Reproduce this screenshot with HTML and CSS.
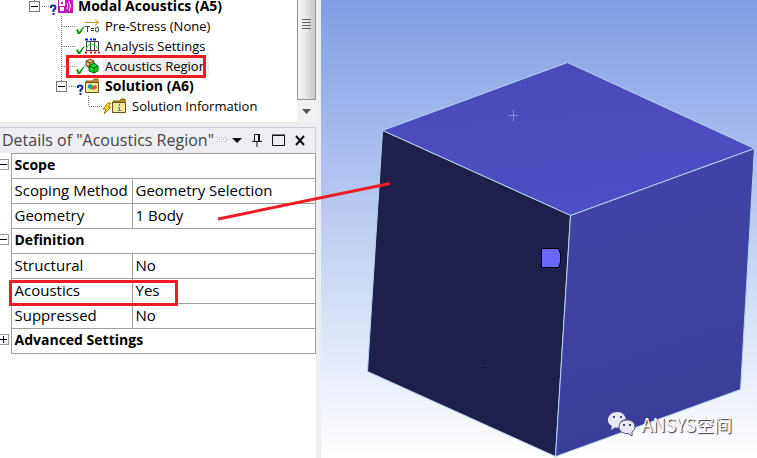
FILE: index.html
```html
<!DOCTYPE html>
<html lang="en">
<head>
<meta charset="utf-8">
<title>Modal Acoustics</title>
<link rel="stylesheet" href="styles.css">
</head>
<body>
<svg class="defs" aria-hidden="true">
  <symbol id="leaf" viewBox="0 0 20 20"><path class="dots" d="M5.5 0V20M6 10.5H20"/></symbol>
  <symbol id="last" viewBox="0 0 20 20"><path class="dots" d="M5.5 0V10M6 10.5H20"/></symbol>
  <symbol id="node" viewBox="0 0 20 20"><path class="dots" d="M5.5 0V5M13 10.5H20"/></symbol>
  <symbol id="check" viewBox="0 0 9 20"><path d="M0 14L2 13L3 16L7 11L9 10L4 18H2Z" fill="#089010"/></symbol>
  <symbol id="query" viewBox="0 0 9 20"><path d="M2 12V10.500Q2 9.500 4 9.500Q6.500 9.500 6.500 11.500Q6.500 13 4.500 14V16M4.500 17V19" fill="none" stroke="#0a2f92" stroke-width="2"/></symbol>
</svg>
<main class="app">
  <aside class="side">
    <section class="outline">
      <ul class="tree">
        <li>
          <div class="row"><span class="branch"><svg><use href="#node"/></svg><button class="toggle" aria-label="Collapse Modal Acoustics"></button></span><svg class="status"><use href="#query"/></svg>
            <svg class="icon" viewBox="0 0 15 20"><path d="M0 0H15V17H0Z" fill="#c818b8"/><path d="M1 4H7V10H1ZM2 11H6V15H2Z" fill="#fff"/><path d="M3 6H5V8H3Z" fill="#c818b8"/><path d="M9 7Q10.500 10 9 13M11 5Q14 10 11 15" fill="none" stroke="#fff"/></svg>
            <b>Modal Acoustics (A5)</b></div>
          <ul>
            <li class="row"><svg class="branch"><use href="#leaf"/></svg><svg class="status"><use href="#check"/></svg>
              <svg class="icon" viewBox="0 0 15 20"><path d="M0 6.500H13M10 3.500L13.500 6.500L10 9.500" fill="none" stroke="#c89418"/><path d="M0 10.500H5M2.500 10.500V16M6 12.500H9M6 14.500H9" fill="none" stroke="#444"/><ellipse cx="12" cy="13.500" rx="1.700" ry="2.500" fill="none" stroke="#444"/></svg>
              <span>Pre-Stress (None)</span></li>
            <li class="row"><svg class="branch"><use href="#leaf"/></svg><svg class="status"><use href="#check"/></svg>
              <svg class="icon" viewBox="0 0 15 20"><path d="M1.500 5V15M5.500 5V15M9.500 5V15M13.500 5V15M1 5.500H14M1 14.500H14" fill="none" stroke="#444"/><path d="M1 13Q3 8 7 8Q11 8 13 13" fill="none" stroke="#18d828"/><path d="M0 3.500H3M5 3.500H7M8 3.500H11" stroke="#0010f0" stroke-width="2"/><path d="M0 16.500H2M5 16.500H7M9 16.500H11M13 16.500H15" stroke="#f01010" stroke-width="2"/></svg>
              <span>Analysis Settings</span></li>
            <li class="row"><svg class="branch"><use href="#leaf"/></svg><svg class="status"><use href="#check"/></svg>
              <svg class="icon" viewBox="0 0 15 20"><path d="M1 5L5 3L9 5V10L5 12L1 10Z" fill="#dbae61" stroke="#645128"/><path d="M1 5L5 7L9 5M5 7V12" fill="none" stroke="#645128"/><path d="M4 10L9 7L13 10V15L9 17L4 15Z" fill="#12dc20" stroke="#075c13"/><path d="M4 10L9 12L13 10M9 12V17" fill="none" stroke="#075c13"/></svg>
              <span class="selected">Acoustics Region</span></li>
            <li>
              <div class="row"><span class="branch"><svg><use href="#node"/></svg><button class="toggle" aria-label="Collapse Solution"></button></span><svg class="status"><use href="#query"/></svg>
                <svg class="icon" viewBox="0 0 15 20"><path d="M1 7V5H8L9 3H13V7Z" fill="#c89018" stroke="#84600d"/><path d="M.5 6.500H13.500V16.500H.5Z" fill="#f7e994" stroke="#64531c"/><path d="M3 9L6 8L8 10L7 14L3 12Z" fill="#2297bb"/><path d="M5 9L8 10L7 13Z" fill="#15bd49"/><path d="M8 10L11 9L12 12L9 14L7 13Z" fill="#ee512c"/></svg>
                <b>Solution (A6)</b></div>
              <ul>
                <li class="row"><svg class="branch"><use href="#last"/></svg>
                  <svg class="status" viewBox="0 0 9 20"><path d="M5 7H8L5 11H8L1 18L3 13H0Z" fill="#ffdc25" stroke="#a77812"/></svg>
                  <svg class="icon" viewBox="0 0 15 20"><path d="M1 7V5H8L9 3H13V7Z" fill="#c89018" stroke="#84600d"/><path d="M.5 6.500H13.500V16.500H.5Z" fill="#f7e994" stroke="#64531c"/><path d="M7.500 8V10M6 11.500H7.500V14M6 14.500H9" fill="none" stroke="#168fca"/></svg>
                  <span>Solution Information</span></li>
              </ul>
            </li>
          </ul>
        </li>
      </ul>
      <div class="scroll">
        <div class="thumb"><i></i><i></i><i></i><i></i></div>
        <button class="down" aria-label="Scroll down"><svg width="9" height="5"><path d="M0 0H9L4.500 5Z" fill="#555"/></svg></button>
      </div>
    </section>
    <section class="details">
      <header>
        <h2>Details of "Acoustics Region"</h2>
        <svg width="12" height="6"><path d="M0 .5H12M2 2.500H12M0 4.500H12" stroke="#aaa" stroke-dasharray="1 3"/></svg>
        <div class="tools">
          <button aria-label="Menu"><svg width="10" height="14"><path d="M0 5H10L5 10Z" fill="#111"/></svg></button>
          <button aria-label="Pin"><svg width="10" height="14"><path d="M2.500 8V1.500H7.500V8M0 8.500H10M5 9V14" fill="none" stroke="#111"/><path d="M6 1H8V8H6Z" fill="#111"/></svg></button>
          <button aria-label="Maximize"><svg width="13" height="14"><path d="M.5 2.500H12.500V12.500H.5ZM0 2H13" fill="none" stroke="#111"/></svg></button>
          <button aria-label="Close"><svg width="10" height="14"><path d="M1 3L9 12M9 3L1 12" stroke="#111" stroke-width="2"/></svg></button>
        </div>
      </header>
      <table>
        <colgroup><col class="gutter"><col class="name"><col></colgroup>
        <tr><td><button class="toggle" aria-label="Collapse Scope"></button></td><th colspan="2">Scope</th></tr>
        <tr><td></td><td>Scoping Method</td><td>Geometry Selection</td></tr>
        <tr><td></td><td>Geometry</td><td>1 Body</td></tr>
        <tr><td><button class="toggle" aria-label="Collapse Definition"></button></td><th colspan="2">Definition</th></tr>
        <tr><td></td><td>Structural</td><td>No</td></tr>
        <tr><td></td><td>Acoustics</td><td>Yes</td></tr>
        <tr><td></td><td>Suppressed</td><td>No</td></tr>
        <tr><td><button class="toggle plus" aria-label="Expand Advanced Settings"></button></td><th colspan="2">Advanced Settings</th></tr>
      </table>
    </section>
  </aside>
  <section class="view">
    <svg class="model" viewBox="0 0 436 458" preserveAspectRatio="xMinYMin meet" role="img" aria-label="Cube">
      <defs>
        <linearGradient id="top" x1=".3" y1="0" x2=".5" y2="1"><stop stop-color="#4a4ab6"/><stop offset="1" stop-color="#4e4ec6"/></linearGradient>
        <linearGradient id="right" x1="0" y1="0" x2=".2" y2="1"><stop stop-color="#4545aa"/><stop offset="1" stop-color="#3c3c98"/></linearGradient>
      </defs>
      <g stroke="#b4d4f0" stroke-linejoin="round">
        <path d="M61.500 130.500L246.500 62.500L433.500 148.500L249.500 215.500Z" fill="url(#top)"/>
        <path d="M61.500 130.500L249.500 215.500L234.500 456.500L46.500 371.500Z" fill="#1f1f4b"/>
        <path d="M249.500 215.500L433.500 148.500L419.500 389.500L234.500 456.500Z" fill="url(#right)"/>
      </g>
      <path d="M187 115.500H197M192.500 110V121" stroke="#7a8ee8"/>
      <path d="M220.500 248.500H237.500L239.500 254V262L237.500 267.500H220.500Z" fill="#6868ff" stroke="#000"/>
      <path d="M163 367H164V368H163Z"/>
    </svg>
    <div class="brand">
      <svg width="28" height="27" viewBox="0 0 28 27"><path d="M9.500 1C4 1 0 4.500 0 9Q0 13 4 15L3 19L7 16.500Q10 17 12 16Q10 9 18 8Q16 1 9.500 1Z" fill="#e8e8f5"/><path d="M19 9C14 9 11 12 11 16S15 23 20 22.500L24 25V21Q27 19 27 16C27 12 24 9 19 9Z" fill="#e8e8f5" stroke="#55557c"/><path d="M5 5H7V7H5ZM12 5H14V7H12ZM15 13H17V15H15ZM21 13H23V15H21Z" fill="#45458f"/></svg>
      <span>ANSYS空间</span>
    </div>
  </section>
  <svg class="marks" width="400" height="320" aria-hidden="true"><path d="M67.500 56.500H204.500V76.500H67.500ZM10.500 281.500H176.500V304.500H10.500ZM218 219L390 183.500" fill="none" stroke="#ed1c24" stroke-width="3"/></svg>
</main>
</body>
</html>
```
FILE: styles.css
```css
* { box-sizing: border-box; }
body { margin: 0; color: #000; background: #eeeef2; }
button { padding: 0; border: 0; background: none; display: block; }
svg { display: block; flex: none; }
ul { margin: 0; padding: 0; list-style: none; }
.defs { position: absolute; width: 0; height: 0; }
.dots { fill: none; stroke: #777; stroke-dasharray: 1 1; }

.app { position: relative; display: grid; grid-template-columns: 321px 1fr; min-height: 100vh; }
.side { display: flex; flex-direction: column; padding-right: 5px; gap: 5px; background: #eeeef0; }

.outline { display: flex; height: 122px; background: #fff; }
.tree { flex: 1; margin-top: -4px; padding-left: 29px; font: 13px/12px "Open Sans", Tahoma, sans-serif; white-space: nowrap; }
.tree ul { padding-left: 27px; }
.row { display: flex; align-items: center; height: 20px; }
.branch { position: relative; flex: none; width: 20px; height: 20px; }
.branch svg { width: 20px; height: 20px; }
.status { width: 9px; height: 20px; }
.icon { width: 15px; height: 20px; margin-right: 3px; }
.row > span:last-child, .row b { padding: 3px 2px; }
.row b { font-size: 14px; }
.selected { background: #efefef; }

.toggle { width: 11px; height: 11px; border: 1px solid #777; background: linear-gradient(#000, #000) center / 7px 1px no-repeat #fff; }
.branch .toggle { position: absolute; left: 0; top: 5px; }
.toggle.plus { background: linear-gradient(#000, #000) center / 7px 1px no-repeat, linear-gradient(#000, #000) center / 1px 7px no-repeat #fff; }

.scroll { display: flex; flex-direction: column; width: 19px; background: #f1f1f1; }
.thumb { flex: 1; display: flex; flex-direction: column; align-items: center; gap: 2px; padding-top: 19px; border: 1px solid #979797; border-top: 0; background: linear-gradient(90deg, #f4f4f4, #e6e6e8 45%, #c8c8cc); }
.thumb i { width: 9px; height: 1px; background: #666; }
.down { display: flex; align-items: center; justify-content: center; height: 22px; }

.details { flex: 1; border-top: 1px solid #ccccdc; background: #fff; font: 15px/22px "Open Sans", "Segoe UI", sans-serif; }
.details header { display: flex; align-items: center; gap: 3px; height: 25px; padding: 0 10px 2px 2px; background: #eeeef2; border-right: 1px solid #ccccdc; }
.details h2 { flex: 1; margin: 0; font-size: 16px; font-weight: 400; color: #444; white-space: nowrap; }
.tools { display: flex; gap: 10px; }

table { width: 100%; border-collapse: collapse; table-layout: fixed; }
.gutter { width: 11px; }
.name { width: 121px; }
td, th { height: 25px; padding: 0 3px 2px; border: 1px solid #a0a0a0; text-align: left; white-space: nowrap; }
th { font-size: 14px; }
td:first-child { padding: 0; border-width: 0 1px 0 0; }
td .toggle { margin: 0 0 4px -2px; border-color: #999; }

.view { position: relative; overflow: hidden; background: linear-gradient(#7f9ee6, #fff); }
.model { width: 100%; }
.brand { position: absolute; right: 25px; bottom: 20px; display: flex; align-items: center; gap: 6px; color: #fff; font: 18px/28px "Noto Sans CJK SC", sans-serif; text-shadow: 1px 1px 1px #333; }
.marks { position: absolute; left: 0; top: 0; pointer-events: none; }
```
